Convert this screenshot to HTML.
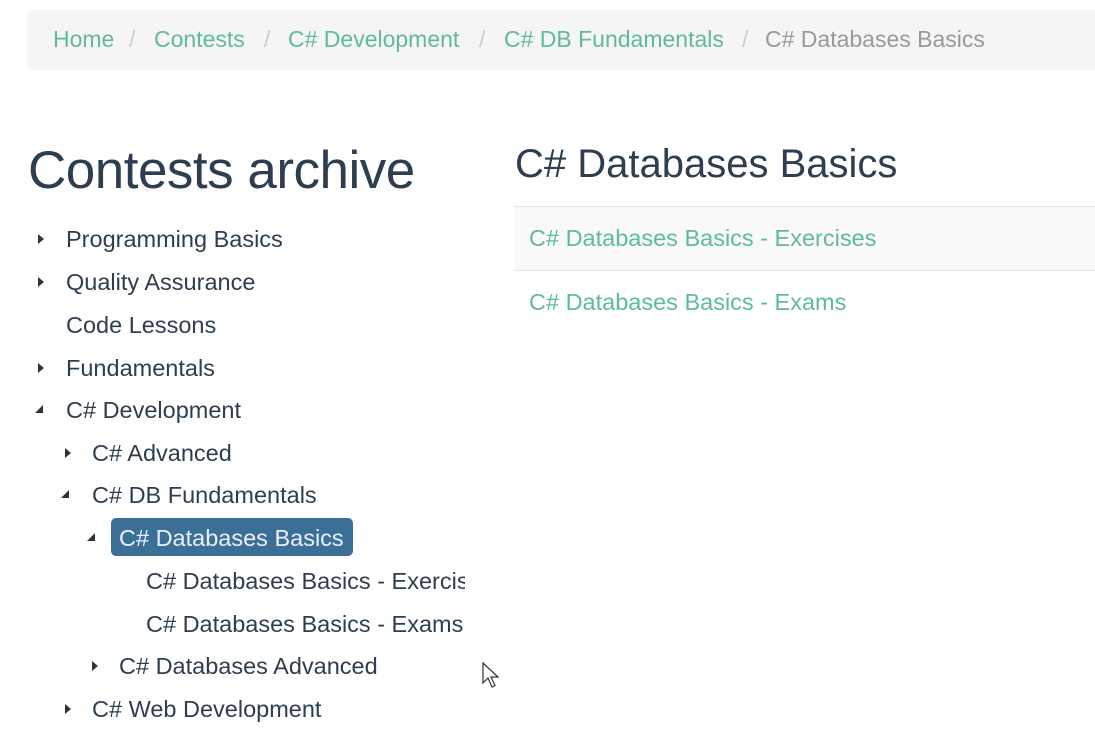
<!DOCTYPE html>
<html><head><meta charset="utf-8"><style>
body{margin:0;width:1095px;height:732px;overflow:hidden;background:#fff;font-family:"Liberation Sans",sans-serif;position:relative}
.bc{position:absolute;left:27px;top:10px;width:1100px;height:60px;background:#f5f5f5;border-radius:6px}
.bc span{position:absolute;top:16px;font-size:23px;color:#5fb9a0;white-space:nowrap}
.bc .s{color:#ccc}
.bc .a{color:#999}
h1{position:absolute;left:28px;top:140px;margin:0;font-weight:normal;font-size:53px;color:#2c3e50;letter-spacing:-0.5px}
h2{position:absolute;left:515px;top:142px;margin:0;font-weight:normal;font-size:40px;color:#2c3e50}
.it{position:absolute;font-size:23.5px;color:#2c3e50;white-space:nowrap;line-height:30px}
.ar{position:absolute;width:0;height:0}
.r{border-top:5px solid transparent;border-bottom:5px solid transparent;border-left:6px solid #333}
.d{border-left:8px solid transparent;border-bottom:8px solid #333}
.sel{position:absolute;left:111px;top:518px;width:242px;height:38px;background:#3a7095;border-radius:5px}
.tb{position:absolute;left:514px;width:600px;border-top:1px solid #e2e2e2}
.ln{position:absolute;left:529px;font-size:23.5px;color:#5fb9a0;white-space:nowrap}
</style></head><body>
<div class="bc">
<span style="left:26px">Home</span><span class="s" style="left:102px">/</span>
<span style="left:127px">Contests</span><span class="s" style="left:237px">/</span>
<span style="left:261px">C# Development</span><span class="s" style="left:452px">/</span>
<span style="left:477px">C# DB Fundamentals</span><span class="s" style="left:715px">/</span>
<span class="a" style="left:738px">C# Databases Basics</span>
</div>
<h1>Contests archive</h1>
<h2>C# Databases Basics</h2>
<div class="tb" style="top:206px;height:64px;background:#f9f9f9"></div>
<div class="tb" style="top:270px"></div>
<div class="ln" style="top:225px">C# Databases Basics - Exercises</div>
<div class="ln" style="top:289px">C# Databases Basics - Exams</div>

<div class="sel"></div>
<div class="ar r" style="left:38px;top:234px"></div><div class="it" style="left:66px;top:224px">Programming Basics</div>
<div class="ar r" style="left:38px;top:277px"></div><div class="it" style="left:66px;top:267px">Quality Assurance</div>
<div class="it" style="left:66px;top:310px">Code Lessons</div>
<div class="ar r" style="left:38px;top:363px"></div><div class="it" style="left:66px;top:353px">Fundamentals</div>
<div class="ar d" style="left:35px;top:405px"></div><div class="it" style="left:66px;top:395px">C# Development</div>
<div class="ar r" style="left:65px;top:448px"></div><div class="it" style="left:92px;top:438px">C# Advanced</div>
<div class="ar d" style="left:61px;top:490px"></div><div class="it" style="left:92px;top:480px">C# DB Fundamentals</div>
<div class="ar d" style="left:87px;top:533px"></div><div class="it" style="left:119px;top:523px;color:#eef">C# Databases Basics</div>
<div class="it" style="left:146px;top:566px;width:319px;overflow:hidden">C# Databases Basics - Exercises</div>
<div class="it" style="left:146px;top:609px">C# Databases Basics - Exams</div>
<div class="ar r" style="left:92px;top:661px"></div><div class="it" style="left:119px;top:651px">C# Databases Advanced</div>
<div class="ar r" style="left:65px;top:704px"></div><div class="it" style="left:92px;top:694px">C# Web Development</div>
<svg style="position:absolute;left:482px;top:662px" width="20" height="28" viewBox="0 0 20 28"><path d="M1 1 L1 21 L6 16 L10 25 L13 23.5 L9 15 L16 15 Z" fill="#fff" stroke="#333" stroke-width="1.2"/></svg>
</body></html>
